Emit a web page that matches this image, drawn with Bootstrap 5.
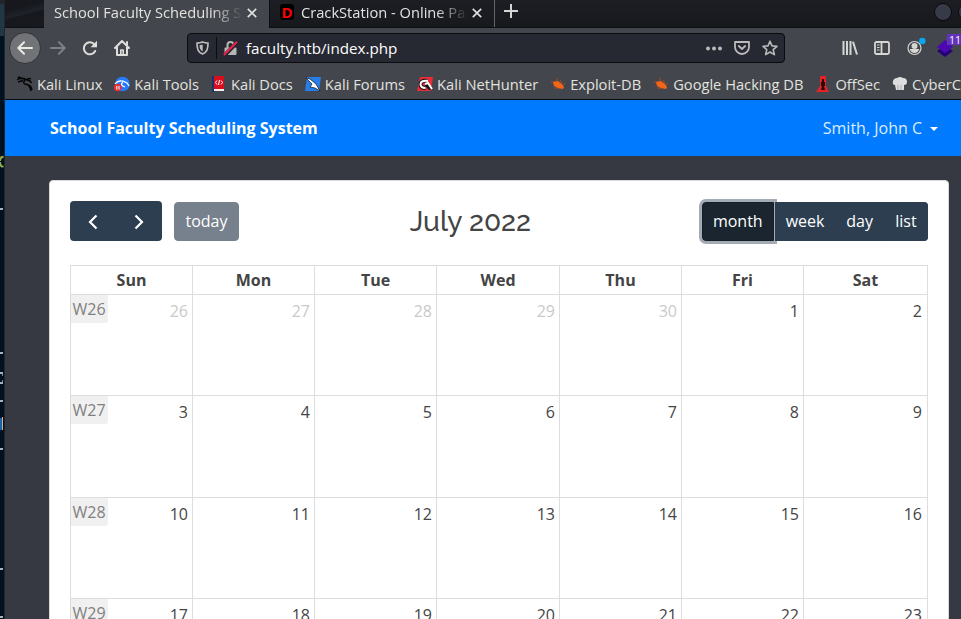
<!DOCTYPE html>
<html lang="en">
<head>
<meta charset="utf-8">
<meta name="viewport" content="width=device-width, initial-scale=1">
<title>School Faculty Scheduling System</title>
<link href="https://cdn.jsdelivr.net/npm/bootstrap@5.3.0/dist/css/bootstrap.min.css" rel="stylesheet">
<style>
html,body{height:619px;overflow:hidden}
body{font-family:"Open Sans","Noto Sans",sans-serif;font-size:16px;background:#00111f;color:#444}
svg{display:block;flex:none}
.edge{width:5px;flex:none}
.win{width:956px;height:619px;background:#363942}
.chrome{font-family:"Open Sans","Noto Sans",sans-serif;font-size:14.67px;color:#e2e2df;white-space:nowrap}
.tabs{height:28px;background:linear-gradient(#1c1e24,#17191d);border-bottom:1px solid #0d0e12;line-height:24px}
.tabgap{width:39px;background:linear-gradient(165deg,#16181e 30%,#20222a 50%,#16181e 55%,#181a20)}
.tab-on{width:225px;height:28px;background:#43464c;padding-left:10px}
.tab-off{width:226px;height:27px;border-right:1px solid #62646a;border-left:1px solid #0d0e12;padding-left:10px}
.tab-label{overflow:hidden;-webkit-mask-image:linear-gradient(90deg,#000 calc(100% - 32px),transparent);mask-image:linear-gradient(90deg,#000 calc(100% - 32px),transparent)}
.on-label{width:189px}
.off-label{width:167px}
.dlogo{width:14px;height:16px;background:#000;color:#f00;font:bold 15px/16px "Open Sans",sans-serif;text-align:center;border-radius:3px;margin:4px 7px 0 0}
.plus{margin:4px 0 0 9px}
.round{width:18px;height:18px;border-radius:50%;background:#373b47;border:1px solid #08090c;flex:none;margin-top:3px}
.round-min{margin-right:6px}
.round-max{margin-right:-15px}
.tools{height:40px;background:#43464c}
.back{width:32px;height:32px;border-radius:50%;background:#727377;border:1px solid #303238;margin-left:4px}
.urlbar{width:598px;height:30px;background:#262832;border:1px solid #0c0c10;border-radius:4px;margin-right:57px}
.urltext{font-size:15.2px;margin-left:8px}
.urlsep{width:1px;height:22px;background:#0c0c10;margin:0 6px 0 7px}
.toolset{width:119px}
.marks{height:32px;background:#43464c;border-bottom:1px solid #0c0c10;padding-left:12px;overflow:hidden;gap:12px}
.marks .bm{gap:4px;flex:none}
.topnav{height:56px;background:#007bff;padding:0 23px 0 45px;color:#fff}
.user{color:#dcebff;gap:8px}
.caret{border-top:4.5px solid #fff;border-left:4.5px solid transparent;border-right:4.5px solid transparent;margin-top:1px}
.sheet{width:900px;height:480px;margin:24px 0 0 44px;background:#fff;border:1px solid #d8d9da;border-radius:4px;padding:20px 20px 0}
.cbtn{background:#2c3e50;border:1px solid #2c3e50;color:#fff;padding:0 9.9px;height:39px;border-radius:0;font-size:16px;line-height:37px}
.head{height:41px}
.pn{border-radius:4px;width:92px;height:40px;background:#2c3e50;margin-bottom:1px}
.today{background:#76818d;border-color:#76818d;border-radius:4px;margin-left:12px;width:65px;padding:0;text-align:center}
.views{border-radius:4px;background:#2c3e50;height:39px}
.views .cbtn:first-child{background:#1a252f;border-color:#151e27;border-radius:4px 0 0 4px;box-shadow:0 0 0 3px #a3abb4;width:72px;margin-right:1px;text-align:center;padding:0}
.views .cbtn:last-child{border-radius:0 4px 4px 0;padding:0 10.4px}
.ttl{font-family:Raleway,Lato,sans-serif;font-size:28px;font-weight:500;line-height:34px;font-feature-settings:"onum"}
.cal{display:grid;grid-template-columns:122px 122px 122px 123px 122px 122px 124px;grid-template-rows:29px 101px 102px 101px 101px;border-top:1px solid #ddd;margin-top:23px;width:858px;border-left:1px solid #ddd}
.cal>div{border-right:1px solid #ddd;border-bottom:1px solid #ddd;position:relative}
.hd{font-weight:700;text-align:center;line-height:29px}
.dy{text-align:right;padding:4px 4px 0 0;line-height:24px}
.cal>.dy:nth-child(7n){padding-right:5px}
.off{color:#c9c9c9}
.wk{position:absolute;left:0;top:0;width:37px;height:28px;background:#f0f0f0;color:#808080;border-radius:0 0 3px 0;line-height:28px;text-align:left;padding-left:1.5px}
</style>
<script src="https://cdn.jsdelivr.net/npm/bootstrap@5.3.0/dist/js/bootstrap.bundle.min.js"></script>
</head>
<body>
<div class="d-flex">
<div class="edge"><svg width="5" height="619"><path fill="#001120" d="M0 0h5v619H0z"/><path fill="#213743" d="M0 0h4v36H0z"/><path fill="#24252a" d="M4 0h1v619H4zM0 0h4v4H0z"/><path d="M3.500 157H2Q0 158 0 161M0 162q0 4 2 4.500h1.500" fill="none" stroke="#8fae4b" stroke-width="2"/><path fill="#aab1b9" d="M0 208h3v2H0zM0 352h3v2H0zM0 372h3v2H0zM0 382h3v2H0zM0 400h3v2H0zM0 448h3v2H0zM0 568h3v2H0zM0 616h3v2H0z"/><path d="M2.500 374v2M2.500 380v2" stroke="#77808b"/><path fill="#1765a8" d="M0 418h2v12H0z"/><path fill="#d8b48d" d="M2 417h1v13H2z"/></svg></div>
<main class="win overflow-hidden">
<header class="chrome">
<div class="tabs d-flex">
<div class="tabgap"></div>
<div class="tab-on d-flex"><div class="tab-label on-label">School Faculty Scheduling System</div><svg width="10" height="10" class="ms-1 mt-2" viewBox="0 0 10 10"><path d="M.8.8l8.400 8.400M9.200.8L.8 9.200" stroke="#dedede" stroke-width="1.700"/></svg></div>
<div class="tab-off d-flex"><div class="dlogo">D</div><div class="tab-label off-label">CrackStation - Online Password</div><svg width="10" height="10" class="ms-1 mt-2" viewBox="0 0 10 10"><path d="M.8.8l8.400 8.400M9.200.8L.8 9.200" stroke="#dedede" stroke-width="1.700"/></svg></div>
<svg class="plus" width="14" height="14"><path d="M7 0v14M0 7h14" stroke="#d6d6d2" stroke-width="2"/></svg>
<div class="round round-min ms-auto"></div><div class="round round-max"></div>
</div>
<div class="tools d-flex align-items-center">
<div class="back d-flex align-items-center justify-content-center"><svg width="16" height="14" viewBox="0 0 16 14" fill="none" stroke="#e9e9e6" stroke-width="2" stroke-linecap="round" stroke-linejoin="round"><path d="M15 7H1.500M7 1.300L1.300 7 7 12.700"/></svg></div>
<svg width="16" height="14" style="margin-left:9px" viewBox="0 0 16 14" fill="none" stroke="#7e8084" stroke-width="2" stroke-linecap="round" stroke-linejoin="round"><path d="M1 7h13.500M9 1.300L14.700 7 9 12.700"/></svg>
<svg width="16" height="16" style="margin-left:16px" viewBox="0 0 16 16"><path d="M13.200 11A6 6 0 1 1 12.500 4.500" fill="none" stroke="#dededb" stroke-width="2" stroke-linecap="round"/><path fill="#dededb" d="M15 .8v6.400H8.600z"/></svg>
<svg width="16" height="16" style="margin-left:16px" viewBox="0 0 16 16" fill="none" stroke="#dededb" stroke-width="2" stroke-linecap="round" stroke-linejoin="round"><path d="M1 8l7-7 7 7M3 7v8h10V7M13 2v3"/><path d="M6.800 15v-5h2.400v5" stroke-width="1.600"/></svg>
<div class="urlbar d-flex align-items-center ms-auto">
<svg width="13" height="14" style="margin-left:8px" viewBox="0 0 13 14"><path d="M6.500 1Q9 2 12 2.200C12 8 11 11 6.500 13C2 11 1 8 1 2.200Q4 2 6.500 1z" fill="none" stroke="#bcbcba" stroke-width="1.700"/><path d="M6.700 3.500v7C4 9 3.500 7 3.500 4.300z" fill="#bcbcba"/></svg>
<div class="urlsep"></div>
<svg width="15" height="15" viewBox="0 0 15 15"><path d="M4.500 7V4a3 3 0 0 1 6 0v3" fill="none" stroke="#b5b5b3" stroke-width="2"/><rect x="1.500" y="6.500" width="12" height="7.500" rx="1" fill="#b5b5b3"/><path d="M1 15L14.500 1" stroke="#262832" stroke-width="4"/><path d="M.8 14L14 .8" stroke="#ee214c" stroke-width="2"/></svg>
<span class="urltext text-white">faculty.htb/index.php</span>
<svg width="16" height="5" class="ms-auto"><g fill="#bababa"><circle cx="2" cy="2.500" r="2"/><circle cx="8" cy="2.500" r="2"/><circle cx="14" cy="2.500" r="2"/></g></svg>
<svg width="16" height="14" style="margin-left:12px" viewBox="0 0 16 14" fill="none" stroke="#bababa" stroke-width="1.800" stroke-linecap="round" stroke-linejoin="round"><path d="M1 1h14v5a7 7 0 0 1-14 0zM4.800 5L8 8l3.200-3"/></svg>
<svg width="16" height="16" style="margin:0 6px 0 12px" viewBox="0 0 16 16"><path d="M8 1.200l2 4.700 5 .4-3.800 3.300 1.200 5L8 12l-4.400 2.600 1.200-5L1 6.300l5-.4z" fill="none" stroke="#bababa" stroke-width="1.600" stroke-linejoin="round"/></svg>
</div>
<div class="toolset d-flex align-items-center">
<svg width="16" height="14" viewBox="0 0 16 14" stroke="#d6d6d3" stroke-width="2"><path d="M1.500 0v14M5 0v14M8.500 0v14M11 .7L15 13.500" /></svg>
<svg width="16" height="14" style="margin-left:16px" viewBox="0 0 16 14" fill="none" stroke="#d6d6d3" stroke-width="1.800"><rect x="1" y="1" width="14" height="12" rx="1.500"/><path d="M7.500 1v12"/><path d="M3 4h2.500M3 6.500h2.500M3 9h2.500" stroke-width="1"/></svg>
<svg width="20" height="20" style="margin:0 0 2px 16px" viewBox="0 0 20 20"><circle cx="8.500" cy="11" r="6.500" fill="none" stroke="#d6d6d3" stroke-width="1.200"/><circle cx="8.500" cy="9" r="3" fill="#d6d6d3"/><path d="M3.700 12h9.600q-1.300 4-4.800 4t-4.800-4z" fill="#d6d6d3"/><circle cx="16.300" cy="4" r="3.200" fill="#06a8f4"/></svg>
<svg width="29" height="24" style="margin-left:11px;margin-bottom:4px" viewBox="0 0 29 24"><path fill="#270075" d="M0 17l8-5 8 5-8 6z"/><path fill="#4a09b1" d="M0 13l8-7 8 7-8 6z"/><path fill="#6432bd" d="M10 0h19v11H10z"/><text x="12" y="9.500" fill="#fff" font-size="10.500" font-family="Open Sans">11</text></svg>
</div>
</div>
<div class="marks d-flex align-items-center">
<div class="bm d-flex align-items-center"><svg width="16" height="16" viewBox="0 0 16 16" fill="none" stroke="#050505" stroke-width="1.500"><path d="M0 3.500Q5 1 9 3.500l4 1.500 1.500 2M1 1l6 2M1 6l5-1.500M8 4q-3 3.500 1 4.500 5 0 6 5.500M9 8q4 1 5 7M10 3l4-.5" /></svg><span>Kali Linux</span></div>
<div class="bm d-flex align-items-center"><svg width="16" height="16" viewBox="0 0 16 16"><circle cx="8.500" cy="8" r="7.300" fill="#267aff"/><path d="M1 8q3-4 8-3l4 2 2 3M9 6q-4 3 2 5" stroke="#fff" stroke-width="1.200" fill="none"/><circle cx="3.800" cy="11.500" r="3.800" fill="#e92d38"/><path d="M2.800 10v3.500M5 10v3.500" stroke="#fff"/></svg><span>Kali Tools</span></div>
<div class="bm d-flex align-items-center"><svg width="16" height="16" viewBox="0 0 16 16"><path fill="#1b3470" d="M1 0h3v16H1z"/><path fill="#d8101e" d="M3 0h10v13H3z"/><path fill="#eee" d="M3 13h10v2H3z"/><path d="M6 4.500L4.500 6.500 6 8.500M10 4.500l1.500 2L10 8.500M8.500 4l-1 5" stroke="#fff" fill="none"/></svg><span>Kali Docs</span></div>
<div class="bm d-flex align-items-center"><svg width="16" height="16" viewBox="0 0 16 16"><path fill="#267eea" d="M2 1h14l-2 14H0z"/><path d="M1 2l4 1 6 5 4 7-5-3-5-1 2-3z" fill="#fff" stroke="#17232e" stroke-width=".8"/></svg><span>Kali Forums</span></div>
<div class="bm d-flex align-items-center"><svg width="16" height="16" viewBox="0 0 16 16"><path fill="#e72c38" d="M3 1h13l-2 14H0z"/><path d="M10 5Q4 4 3.500 8q0 4 5 4M9 8l5 5" fill="none" stroke="#17171a" stroke-width="4"/><path d="M11 5Q4 4 3.500 8q0 4 5 4M8 8l3-1 4 6" fill="none" stroke="#fff" stroke-width="2"/></svg><span>Kali NetHunter</span></div>
<div class="bm d-flex align-items-center"><svg width="16" height="16" viewBox="0 0 16 16"><path d="M1 6h5M4 12h7M7 2v4M10 4l2 3M13 9l2-2M12 13l1-1" stroke="#a74a22"/><path fill="#f26519" d="M3 6l5-1 4 3 2 3-1 2-5-1-4-2z"/></svg><span>Exploit-DB</span></div>
<div class="bm d-flex align-items-center"><svg width="16" height="16" viewBox="0 0 16 16"><path d="M1 6h5M4 12h7M7 2v4M10 4l2 3M13 9l2-2M12 13l1-1" stroke="#a74a22"/><path fill="#f26519" d="M3 6l5-1 4 3 2 3-1 2-5-1-4-2z"/></svg><span>Google Hacking DB</span></div>
<div class="bm d-flex align-items-center"><svg width="16" height="16" viewBox="0 0 16 16"><path fill="#e32425" d="M5 0h6v10l3 6H1l4-6z"/><path fill="#29090c" d="M7 3h2v3h1v4H9l1 4H6l1-4H6V6h1z"/></svg><span>OffSec</span></div>
<div class="bm d-flex align-items-center"><svg width="16" height="16" viewBox="0 0 16 16"><path fill="#dedede" d="M3 9Q0 9 1 5q1-3 4-3 3-2 6 0 4 0 4 4 0 3-3 3v5H4z"/><path d="M6 9v5M9 9v5" stroke="#aaa"/></svg><span>CyberChef</span></div>
</div>
</header>
<nav class="topnav d-flex align-items-center justify-content-between"><b>School Faculty Scheduling System</b><div class="user d-flex align-items-center">Smith, John C<span class="caret"></span></div></nav>
<section class="sheet">
<div class="head d-flex justify-content-between align-items-center">
<div class="d-flex align-items-center"><div class="pn d-flex align-items-center"><svg width="92" height="40" fill="none" stroke="#fff" stroke-width="2.200"><path d="M26.500 14.500L20 21l6.500 6.500M65.500 14.500L72 21l-6.500 6.500"/></svg></div><div class="cbtn today">today</div></div>
<div class="ttl">July 2022</div>
<div class="views d-flex"><div class="cbtn">month</div><div class="cbtn">week</div><div class="cbtn">day</div><div class="cbtn">list</div></div>
</div>
<div class="cal">
<div class="hd">Sun</div><div class="hd">Mon</div><div class="hd">Tue</div><div class="hd">Wed</div><div class="hd">Thu</div><div class="hd">Fri</div><div class="hd">Sat</div>
<div class="dy off"><span class="wk">W26</span>26</div><div class="dy off">27</div><div class="dy off">28</div><div class="dy off">29</div><div class="dy off">30</div><div class="dy">1</div><div class="dy">2</div>
<div class="dy"><span class="wk">W27</span>3</div><div class="dy">4</div><div class="dy">5</div><div class="dy">6</div><div class="dy">7</div><div class="dy">8</div><div class="dy">9</div>
<div class="dy"><span class="wk">W28</span>10</div><div class="dy">11</div><div class="dy">12</div><div class="dy">13</div><div class="dy">14</div><div class="dy">15</div><div class="dy">16</div>
<div class="dy"><span class="wk">W29</span>17</div><div class="dy">18</div><div class="dy">19</div><div class="dy">20</div><div class="dy">21</div><div class="dy">22</div><div class="dy">23</div>
</div>
</section>
</main>
</div>
</body>
</html>
